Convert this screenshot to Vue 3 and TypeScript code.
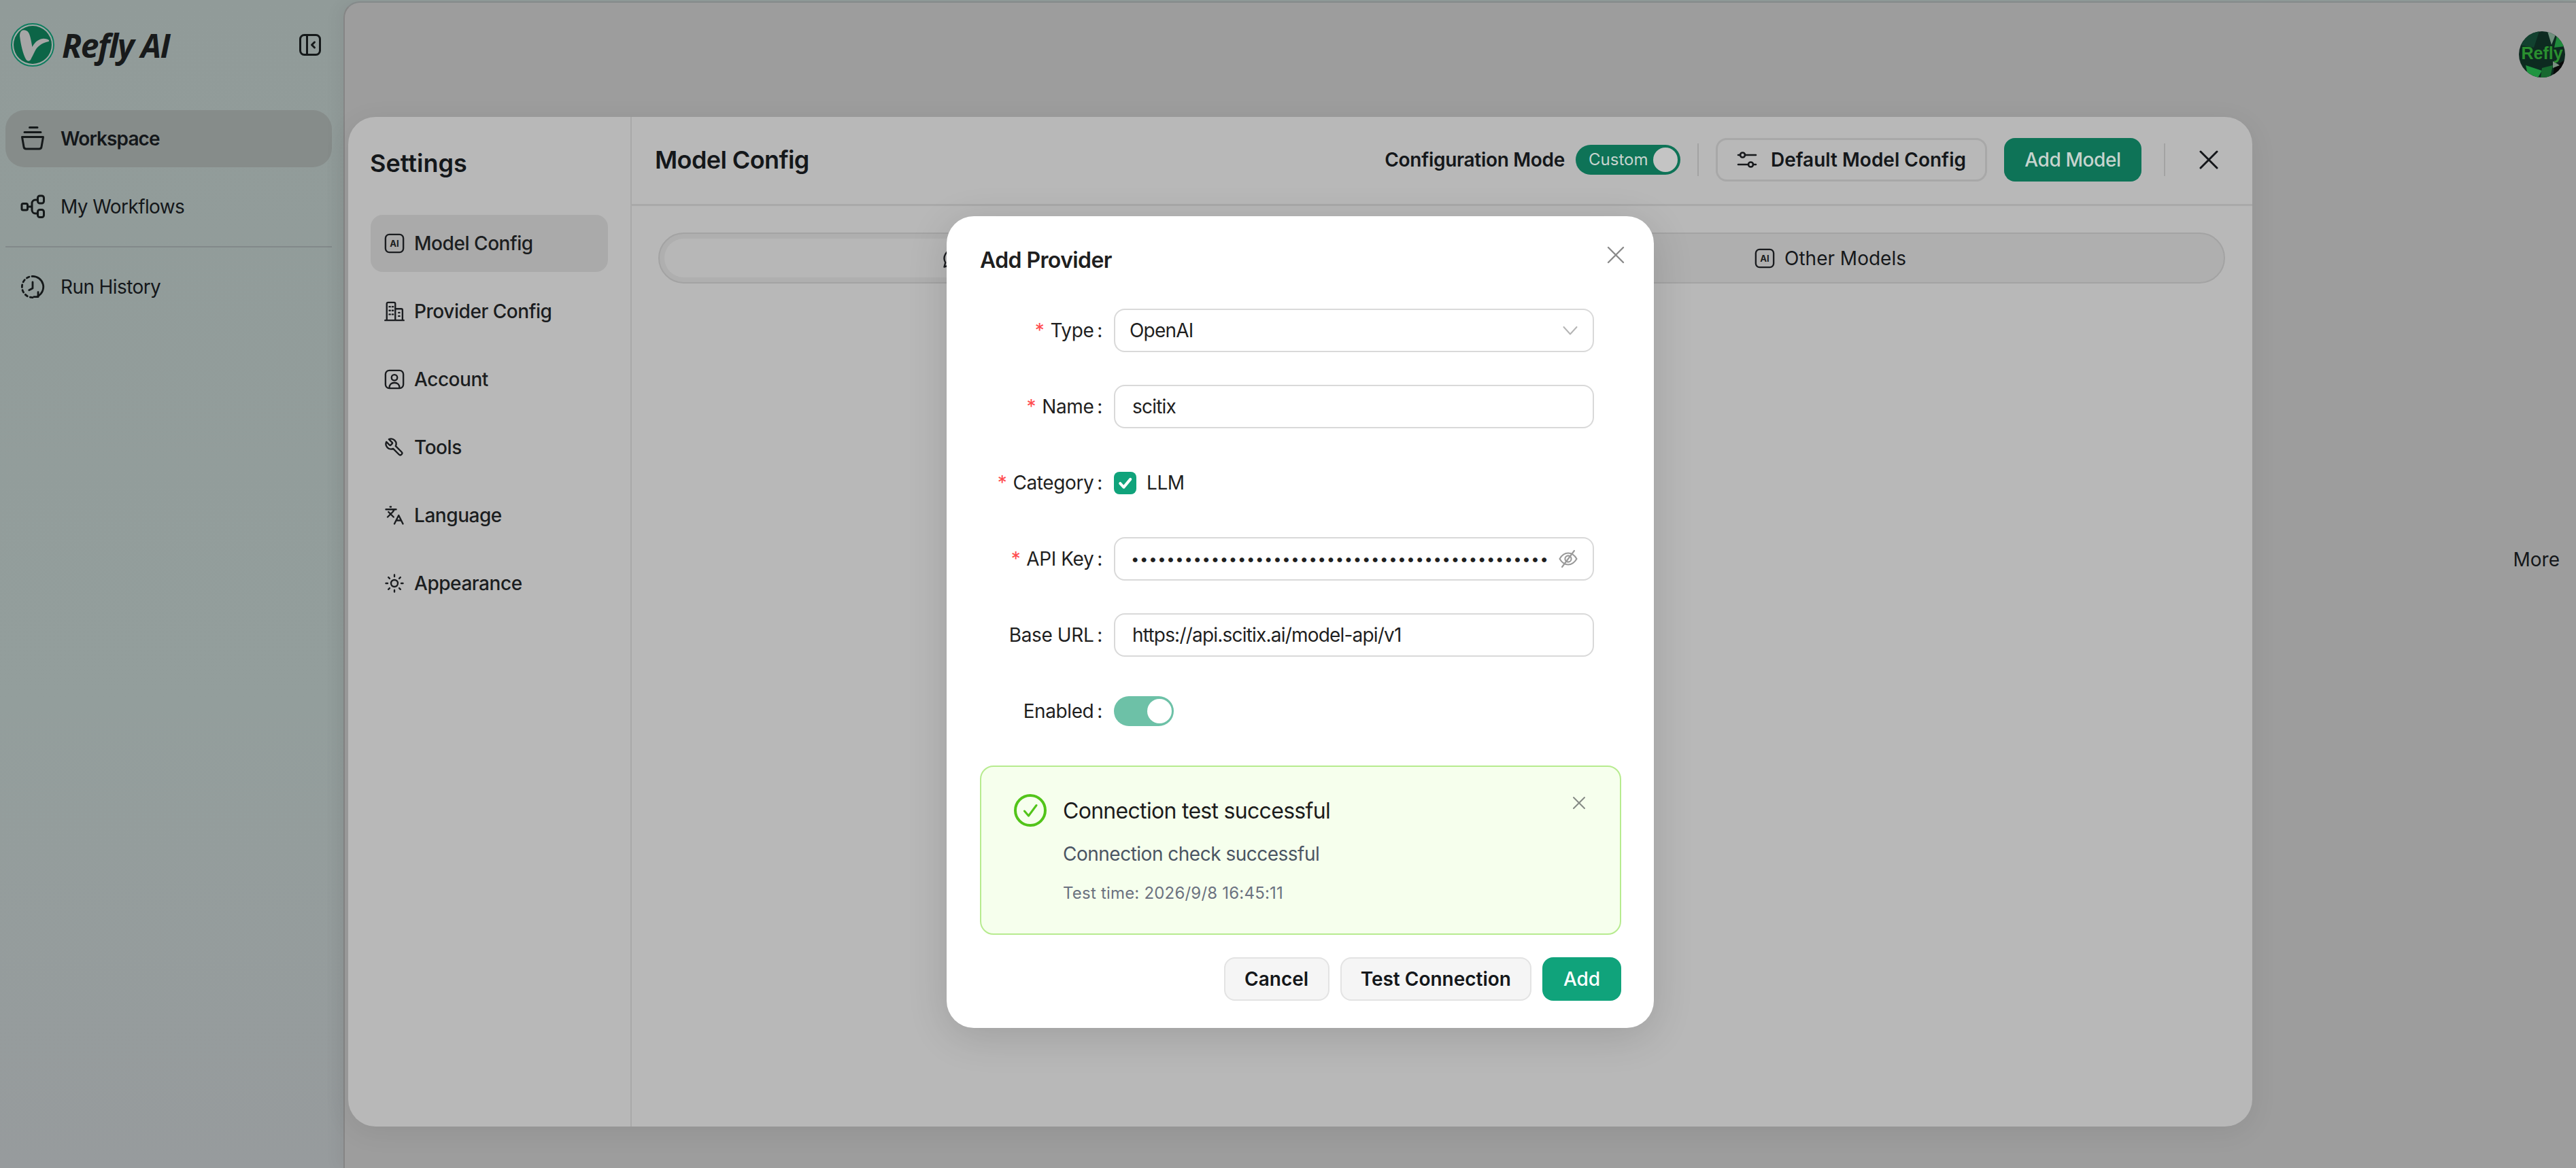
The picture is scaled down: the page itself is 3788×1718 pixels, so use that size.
<script setup lang="ts">
interface MenuItem {
  label: string;
  d: string;
  badge?: boolean;
  flip?: boolean;
}

const frame = 'M6 1.5h12a4.5 4.5 0 0 1 4.5 4.5v12a4.5 4.5 0 0 1-4.5 4.5H6A4.5 4.5 0 0 1 1.5 18V6A4.5 4.5 0 0 1 6 1.5Z';

const menu: MenuItem[] = [
  { label: 'Model Config', d: frame, badge: true },
  {
    label: 'Provider Config',
    d: 'M1 22.5h22M3 22.5V3a1.5 1.5 0 0 1 1.5-1.5h7A1.5 1.5 0 0 1 13 3v19.5M13 9h7a1.5 1.5 0 0 1 1.5 1.5v12M6 6.5h1M9.5 6.5h1M6 11h1M9.5 11h1M6 15.5h1M9.5 15.5h1M17 13.5h1M17 17.5h1',
  },
  {
    label: 'Account',
    d: frame + 'M12 6.5a3.4 3.4 0 1 0 0 6.8a3.4 3.4 0 0 0 0-6.8ZM6 22c0-3.8 2.5-6 6-6s6 2.2 6 6',
  },
  {
    label: 'Tools',
    flip: true,
    d: 'M14.7 6.3a1 1 0 0 0 0 1.4l1.6 1.6a1 1 0 0 0 1.4 0l3.77-3.77a6 6 0 0 1-7.94 7.94l-6.91 6.91a2.12 2.12 0 0 1-3-3l6.91-6.91a6 6 0 0 1 7.94-7.94l-3.76 3.76z',
  },
  {
    label: 'Language',
    d: 'm5 8 6 6M4 14l6-6 2-3M2 5h12M7 2h1M22 22l-5-10-5 10M14 18h6',
  },
  {
    label: 'Appearance',
    d: 'M12 8a4 4 0 1 0 0 8a4 4 0 0 0 0-8ZM12 2v2M12 20v2M4.93 4.93l1.41 1.41M17.66 17.66l1.41 1.41M2 12h2M20 12h2M6.34 17.66l-1.41 1.41M19.07 4.93l-1.41 1.41',
  },
];

const apiKeyDots = '•'.repeat(47);
</script>

<template>
  <div class="app">
    <aside class="sidebar">
      <div class="brand">
        <svg class="logo" viewBox="0 0 64 64">
          <circle cx="32" cy="32" r="31" fill="#a3aaa8" stroke="#0f7d5f" stroke-width="2" />
          <circle cx="32" cy="32" r="28" fill="#0c6547" />
          <path
            fill="#a6a6a6"
            d="M19 10.3C14 10.3 12.5 16 13.3 21C14.5 31 18 46 22 53C24 56.5 28 56.5 29.5 53C31 50 33 46 35 42C38 35 45 29 55.7 27C56.5 26 56 25 55.5 24.8C48 20.5 38 23 31.5 35C30 28 29 19 26 14C24.5 11.5 22 10.3 19 10.3Z"
          />
        </svg>
        <span class="brand-name">Refly AI</span>
        <svg class="collapse" viewBox="0 0 32 32" fill="none" stroke="#15191a" stroke-width="3">
          <rect x="1.5" y="1.5" width="29" height="29" rx="6" />
          <path d="M11.5 1.5v29" />
          <path d="M22.5 12l-4 4 4 4" stroke-linecap="round" stroke-linejoin="round" />
        </svg>
      </div>

      <nav class="nav">
        <a class="nav-item active">
          <svg class="nav-icon" viewBox="0 0 36 36" fill="none" stroke="#15191a" stroke-width="3" stroke-linecap="round" stroke-linejoin="round">
            <path d="M13.5 1.5H25M6 8.5H30" />
            <path d="M2.5 15.5H33.5L31 30a3.5 3.5 0 0 1-3.5 3H8.5A3.5 3.5 0 0 1 5 30Z" />
          </svg>
          Workspace
        </a>
        <a class="nav-item">
          <svg class="nav-icon" viewBox="0 0 36 36" fill="none" stroke="#15191a" stroke-width="3" stroke-linejoin="round">
            <rect x="2" y="13.5" width="8.5" height="9.5" rx="2" />
            <rect x="25.5" y="2" width="9" height="11" rx="3" />
            <rect x="25.5" y="22.5" width="9" height="11" rx="3" />
            <path d="M10.5 18H17M25.5 8H22a5 5 0 0 0-5 5V23a5 5 0 0 0 5 5H25.5" />
          </svg>
          My Workflows
        </a>
        <div class="nav-divider"></div>
        <a class="nav-item">
          <svg class="nav-icon" viewBox="0 0 38 38" fill="none" stroke="#15191a" stroke-width="3" stroke-linecap="round" stroke-linejoin="round">
            <path d="M19 2.5A16.5 16.5 0 0 1 27 33.5" />
            <path d="M19 35.5A16.5 16.5 0 0 1 19 2.5" stroke-dasharray="4 4.4" />
            <path d="M19 11.5V21L13.5 24" />
            <path d="M27.5 27V34.5H21" />
          </svg>
          Run History
        </a>
      </nav>
    </aside>

    <main class="main">
      <svg class="avatar" viewBox="0 0 68 68">
        <clipPath id="avatar-clip"><circle cx="34" cy="34" r="34" /></clipPath>
        <g clip-path="url(#avatar-clip)">
          <rect width="68" height="68" fill="#0d2a20" />
          <path d="M0 20L18 0H30L22 24Z" fill="#12412f" />
          <path d="M42 0H56L48 20Z" fill="#6f8f7d" />
          <path d="M56 6L68 22L52 24Z" fill="#1f8a3c" />
          <path d="M10 50L34 58L28 68H14Z" fill="#1f9440" />
          <path d="M34 54L50 50L46 68H32Z" fill="#17692f" />
          <path d="M52 52L68 42V62L50 68Z" fill="#0a0a0a" />
          <path d="M50 44L60 50L50 54Z" fill="#78907f" />
          <text x="34" y="41" text-anchor="middle" class="avatar-text">Refly</text>
        </g>
      </svg>
      <span class="more">More</span>
    </main>

    <section class="settings">
      <div class="settings-side">
        <h2 class="settings-title">Settings</h2>
        <ul class="menu">
          <li v-for="(item, i) in menu" :key="item.label" class="menu-item" :class="{ current: i === 0 }">
            <svg class="menu-icon" viewBox="0 0 24 24" fill="none" stroke="#1b1d20" stroke-width="1.9" stroke-linecap="round" stroke-linejoin="round">
              <path :d="item.d" :transform="item.flip ? 'translate(24 0) scale(-1 1)' : undefined" />
              <text v-if="item.badge" x="12" y="16" text-anchor="middle" class="ai-mark">AI</text>
            </svg>
            {{ item.label }}
          </li>
        </ul>
      </div>

      <div class="settings-body">
        <header class="settings-header">
          <h3 class="page-title">Model Config</h3>
          <div class="actions">
            <span class="mode-label">Configuration Mode</span>
            <span class="mode-switch">Custom<i class="knob"></i></span>
            <i class="v-line"></i>
            <button class="btn btn-outline">
              <svg class="btn-icon" viewBox="0 0 30 26" fill="none" stroke="#17191c" stroke-width="2.6" stroke-linecap="round">
                <path d="M2 6H5M12 6H28M2 20H17M24 20H28" />
                <circle cx="8.5" cy="6" r="3.5" />
                <circle cx="20.5" cy="20" r="3.5" />
              </svg>
              Default Model Config
            </button>
            <button class="btn btn-dark">Add Model</button>
            <i class="v-line v-line-close"></i>
            <svg class="close-main" viewBox="0 0 28 28" fill="none" stroke="#14161a" stroke-width="3" stroke-linecap="round">
              <path d="M2 2L26 26M26 2L2 26" />
            </svg>
          </div>
        </header>

        <div class="tabs">
          <!-- the label of this tab sits fully behind the dialog -->
          <div class="tab tab-active">
            <svg class="tab-icon" viewBox="0 0 24 24" fill="none" stroke="#1b1d20" stroke-width="1.9" stroke-linecap="round" stroke-linejoin="round">
              <path d="M12 2a10 10 0 0 0-8.6 15L2 22l5-1.4A10 10 0 1 0 12 2Z" />
            </svg>
          </div>
          <div class="tab">
            <svg class="tab-icon" viewBox="0 0 24 24" fill="none" stroke="#1b1d20" stroke-width="1.9" stroke-linecap="round" stroke-linejoin="round">
              <path :d="frame" />
              <text x="12" y="16" text-anchor="middle" class="ai-mark">AI</text>
            </svg>
            Other Models
          </div>
        </div>
      </div>
    </section>

    <section class="dialog">
      <h3 class="dialog-title">Add Provider</h3>
      <svg class="dialog-close" viewBox="0 0 26 26" fill="none" stroke="#8a8a8a" stroke-width="2.4" stroke-linecap="round">
        <path d="M2 2L24 24M24 2L2 24" />
      </svg>

      <form class="form" @submit.prevent>
        <div class="row">
          <label class="label"><b>*</b>Type<em>:</em></label>
          <div class="field">
            <span class="field-value select-value">OpenAI</span>
            <svg class="chevron" viewBox="0 0 22 14" fill="none" stroke="#b5b5b5" stroke-width="2" stroke-linecap="round" stroke-linejoin="round">
              <path d="M1.5 2L11 12.5L20.5 2" />
            </svg>
          </div>
        </div>
        <div class="row">
          <label class="label"><b>*</b>Name<em>:</em></label>
          <div class="field"><span class="field-value">scitix</span></div>
        </div>
        <div class="row">
          <label class="label"><b>*</b>Category<em>:</em></label>
          <span class="checkbox">
            <svg viewBox="0 0 32 32" fill="none" stroke="#fff" stroke-width="4" stroke-linecap="round" stroke-linejoin="round">
              <path d="M9 16.5L14 22L23.5 10.5" />
            </svg>
          </span>
          <span class="check-text">LLM</span>
        </div>
        <div class="row">
          <label class="label"><b>*</b>API Key<em>:</em></label>
          <div class="field">
            <span class="dots">{{ apiKeyDots }}</span>
            <svg class="eye" viewBox="0 0 28 28" fill="none" stroke="#999" stroke-width="2.1" stroke-linecap="round" stroke-linejoin="round">
              <path d="M1.5 14C5 8 9 5.5 14 5.5S23 8 26.5 14C23 20 19 22.5 14 22.5S5 20 1.5 14Z" />
              <circle cx="14" cy="14" r="4.6" />
              <path d="M23 2L5 26" />
            </svg>
          </div>
        </div>
        <div class="row">
          <label class="label">Base URL<em>:</em></label>
          <div class="field"><span class="field-value">https://api.scitix.ai/model-api/v1</span></div>
        </div>
        <div class="row">
          <label class="label">Enabled<em>:</em></label>
          <span class="enabled-switch"><i class="knob"></i></span>
        </div>
      </form>

      <div class="alert">
        <svg class="alert-icon" viewBox="0 0 48 48" fill="none" stroke="#52c41a" stroke-linecap="round" stroke-linejoin="round">
          <circle cx="24" cy="24" r="22" stroke-width="4" />
          <path d="M15.5 25L21.5 32L33 16.5" stroke-width="3" />
        </svg>
        <div class="alert-text">
          <div class="alert-title">Connection test successful</div>
          <div class="alert-desc">Connection check successful</div>
          <div class="alert-time">Test time: 2026/9/8 16:45:11</div>
        </div>
        <svg class="alert-close" viewBox="0 0 20 20" fill="none" stroke="#858a85" stroke-width="2" stroke-linecap="round">
          <path d="M2 2L18 18M18 2L2 18" />
        </svg>
      </div>

      <footer class="dialog-footer">
        <button class="btn btn-gray">Cancel</button>
        <button class="btn btn-gray">Test Connection</button>
        <button class="btn btn-green">Add</button>
      </footer>
    </section>
  </div>
</template>

<style>
html,
body {
  margin: 0;
  background: #9d9d9d;
}
</style>

<style scoped>
.app {
  position: relative;
  display: flex;
  width: 3788px;
  height: 1718px;
  overflow: hidden;
  background: linear-gradient(180deg, #919b99 0%, #939e9c 60%, #979b9d 100%);
  font-family: Inter, "Noto Sans", sans-serif;
  font-size: 28px;
  color: #14171a;
}

/* sidebar */
.sidebar {
  flex: 0 0 505px;
  box-sizing: border-box;
  padding: 34px 17px 0 8px;
}

.brand {
  display: flex;
  align-items: center;
  height: 64px;
  padding-left: 8px;
}

.logo {
  width: 64px;
  height: 64px;
}

.brand-name {
  margin-left: 11px;
  font-family: "Open Sans", sans-serif;
  font-size: 48px;
  font-style: italic;
  font-weight: 700;
  letter-spacing: -1.6px;
  color: #181a1b;
}

.collapse {
  width: 32px;
  height: 32px;
  margin-left: auto;
  margin-right: 16px;
}

.nav {
  margin-top: 64px;
}

.nav-item {
  display: flex;
  align-items: center;
  gap: 23px;
  height: 84px;
  margin-bottom: 16px;
  padding-left: 22px;
  border-radius: 28px;
  letter-spacing: -0.6px;
}

.nav-item.active {
  background: #868c8a;
  font-weight: 600;
  letter-spacing: -0.9px;
}

.nav-icon {
  flex: none;
  width: 36px;
  height: 36px;
}

.nav-divider {
  height: 2px;
  margin: 16px 0;
  background: #82898a;
}

/* page behind the dialogs */
.main {
  flex: 1;
  display: flex;
  flex-direction: column;
  align-items: flex-end;
  margin-top: 2px;
  padding: 42px 16px 0 0;
  border-top: 2px solid #858a8a;
  border-left: 2px solid #858585;
  border-top-left-radius: 24px;
  background: #9d9d9d;
  box-shadow: -10px 0 20px rgba(0, 0, 0, 0.04);
}

.avatar {
  width: 68px;
  height: 68px;
}

.avatar-text {
  font-family: "Liberation Sans", sans-serif;
  font-size: 25px;
  font-weight: 700;
  fill: #2a8f2f;
}

.more {
  margin-top: 692px;
  margin-right: 8px;
  line-height: 34px;
}

/* settings modal */
.settings {
  position: absolute;
  left: 512px;
  top: 172px;
  display: flex;
  width: 2800px;
  height: 1485px;
  border-radius: 40px;
  background: #b8b8b8;
  box-shadow: 0 8px 40px rgba(0, 0, 0, 0.07);
}

.settings-side {
  flex: 0 0 417px;
  box-sizing: border-box;
  padding: 44px 33px 0;
  border-right: 2px solid #a9a9a9;
}

.settings-title {
  margin: 0 0 52px -1px;
  font-size: 36px;
  font-weight: 600;
  line-height: 48px;
}

.menu {
  margin: 0;
  padding: 0;
  list-style: none;
}

.menu-item {
  display: flex;
  align-items: center;
  gap: 14px;
  height: 84px;
  margin-bottom: 16px;
  padding-left: 20px;
  border-radius: 18px;
  font-weight: 500;
  letter-spacing: -0.45px;
  color: #1b1d20;
}

.menu-item.current {
  background: #aaaaaa;
}

.menu-icon,
.tab-icon {
  flex: none;
  width: 30px;
  height: 30px;
}

.ai-mark {
  font-family: Inter, sans-serif;
  font-size: 10.5px;
  font-weight: 700;
  letter-spacing: 0;
  fill: #1b1d20;
  stroke: none;
}

.settings-body {
  flex: 1;
  min-width: 0;
}

.settings-header {
  display: flex;
  align-items: center;
  justify-content: space-between;
  box-sizing: border-box;
  height: 131px;
  padding: 0 50px 2px 34px;
  border-bottom: 3px solid #a9a9a9;
}

.page-title {
  margin: 0;
  font-size: 36px;
  font-weight: 600;
  letter-spacing: -0.6px;
}

.actions {
  display: flex;
  align-items: center;
}

.mode-label {
  margin-right: 16px;
  font-weight: 600;
  letter-spacing: -0.3px;
}

.mode-switch {
  position: relative;
  box-sizing: border-box;
  width: 154px;
  height: 44px;
  padding-left: 19px;
  border-radius: 22px;
  background: #0e7357;
  font-size: 24px;
  line-height: 44px;
  color: #c6d4ce;
}

.knob {
  position: absolute;
  top: 4px;
  right: 4px;
  width: 36px;
  height: 36px;
  border-radius: 50%;
  background: #c4c4c4;
}

.v-line {
  width: 2px;
  height: 48px;
  margin: 0 25px;
  background: #a3a3a3;
}

.v-line-close {
  margin: 0 50px 0 33px;
}

.btn {
  display: inline-flex;
  align-items: center;
  justify-content: center;
  box-sizing: border-box;
  height: 64px;
  border-radius: 16px;
  font-family: inherit;
  font-size: 28px;
  font-weight: 600;
  color: #14171a;
  cursor: pointer;
}

.btn-outline {
  width: 399px;
  gap: 20px;
  border: 3px solid #a8a8a8;
  background: transparent;
}

.btn-icon {
  width: 30px;
  height: 26px;
}

.btn-dark {
  width: 202px;
  margin-left: 25px;
  border: none;
  background: #0e7357;
  font-weight: 500;
  letter-spacing: -0.4px;
  color: #c6d4ce;
}

.close-main {
  width: 28px;
  height: 28px;
}

.tabs {
  display: flex;
  box-sizing: border-box;
  height: 75px;
  margin: 39px 40px 0 39px;
  padding: 7px;
  border: 2px solid #a3a3a3;
  border-radius: 38px;
  background: #afafaf;
}

.tab {
  flex: 1 1 0;
  display: flex;
  align-items: center;
  justify-content: center;
  gap: 14px;
  border-radius: 30px;
  color: #16181b;
}

.tab-active {
  background: #b7b7b7;
}

.tab-active .tab-icon {
  margin-right: 295px;
}

/* add provider dialog */
.dialog {
  position: absolute;
  left: 1392px;
  top: 318px;
  box-sizing: border-box;
  width: 1040px;
  height: 1194px;
  padding: 40px 48px 40px 49px;
  border-radius: 40px;
  background: #fff;
  box-shadow: 0 12px 60px rgba(0, 0, 0, 0.14);
  color: #1f1f1f;
}

.dialog-title {
  margin: 0 0 46px;
  font-size: 32px;
  font-weight: 600;
  line-height: 50px;
  letter-spacing: -0.6px;
}

.dialog-close {
  position: absolute;
  top: 44px;
  right: 43px;
  width: 26px;
  height: 26px;
}

.row {
  display: flex;
  align-items: center;
  height: 64px;
  margin-bottom: 48px;
}

.label {
  flex: 0 0 197px;
  box-sizing: border-box;
  padding-right: 17px;
  text-align: right;
  letter-spacing: -0.4px;
}

.label b {
  margin-right: 9px;
  font-weight: 400;
  color: #ff4d4f;
}

.label em {
  margin-left: 5px;
  font-style: normal;
}

.field {
  display: flex;
  align-items: center;
  justify-content: space-between;
  box-sizing: border-box;
  width: 706px;
  height: 64px;
  padding: 0 22px 0 25px;
  border: 2px solid #d9d9d9;
  border-radius: 16px;
}

.field-value {
  white-space: nowrap;
  letter-spacing: -0.8px;
}

.select-value {
  margin-left: -4px;
}

.dots {
  margin-left: -2px;
  font-size: 22px;
  letter-spacing: 0.7px;
  white-space: nowrap;
}

.chevron {
  width: 22px;
  height: 14px;
}

.eye {
  flex: none;
  width: 28px;
  height: 28px;
}

.checkbox {
  width: 33px;
  height: 33px;
  border-radius: 8px;
  background: #10a37b;
}

.checkbox svg {
  display: block;
}

.check-text {
  margin-left: 15px;
  letter-spacing: -0.4px;
}

.enabled-switch {
  position: relative;
  width: 88px;
  height: 44px;
  border-radius: 22px;
  background: #6dc1a7;
}

.enabled-switch .knob {
  right: 3px;
  background: #fff;
}

.alert {
  position: relative;
  display: flex;
  box-sizing: border-box;
  height: 249px;
  padding: 40px 48px;
  border: 2px solid #b7eb8f;
  border-radius: 20px;
  background: #f6ffed;
}

.alert-icon {
  flex: none;
  width: 48px;
  height: 48px;
  margin-right: 24px;
}

.alert-title {
  font-size: 32px;
  line-height: 50px;
  letter-spacing: -0.7px;
  color: #1c1c1c;
}

.alert-desc {
  margin-top: 21px;
  line-height: 34px;
  letter-spacing: -0.5px;
  color: #4b5563;
}

.alert-time {
  margin-top: 26px;
  font-size: 24px;
  line-height: 30px;
  letter-spacing: 0.2px;
  color: #6b7280;
}

.alert-close {
  position: absolute;
  top: 43px;
  right: 50px;
  width: 20px;
  height: 20px;
}

.dialog-footer {
  display: flex;
  justify-content: flex-end;
  gap: 16px;
  margin-top: 33px;
}

.btn-gray {
  min-width: 155px;
  padding: 0 28px;
  border: 2px solid #e3e3e3;
  background: #f5f5f5;
}

.btn-green {
  width: 116px;
  border: none;
  background: #10a37b;
  font-weight: 500;
  color: #fff;
}
</style>
